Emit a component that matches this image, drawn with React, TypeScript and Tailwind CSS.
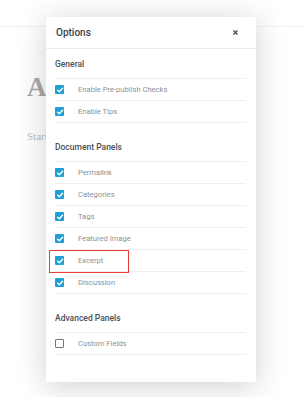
import { X } from "lucide-react";

type Item = { label: string; checked: boolean; marked?: boolean };

const sections: { title: string; items: Item[] }[] = [
  {
    title: "General",
    items: [
      { label: "Enable Pre-publish Checks", checked: true },
      { label: "Enable Tips", checked: true },
    ],
  },
  {
    title: "Document Panels",
    items: [
      { label: "Permalink", checked: true },
      { label: "Categories", checked: true },
      { label: "Tags", checked: true },
      { label: "Featured Image", checked: true },
      { label: "Excerpt", checked: true, marked: true },
      { label: "Discussion", checked: true },
    ],
  },
  {
    title: "Advanced Panels",
    items: [{ label: "Custom Fields", checked: false }],
  },
];

function Checkbox({ checked }: { checked: boolean }) {
  if (!checked) {
    return <span className="block size-[9px] rounded-[1px] border-[1.5px] border-[#6c7781] bg-white" />;
  }
  return (
    <span className="grid size-[9px] place-items-center rounded-[1px] bg-[#1e9fd6]">
      <svg viewBox="0 0 10 10" className="size-[8px]">
        <path d="M2 5.2 L4.2 7.3 L8.2 2.8" fill="none" stroke="white" strokeWidth="1.8" strokeLinecap="round" strokeLinejoin="round" />
      </svg>
    </span>
  );
}

export default function App() {
  return (
    <div className="relative h-[397px] w-[305px] overflow-hidden bg-white font-['Roboto','Open_Sans',sans-serif]">
      {/* editor behind the modal */}
      <div className="h-[27px] border-b border-[#f1f1f1]" />
      <div className="pl-[27px] font-['Liberation_Serif',serif]">
        <p className="mt-[47px] text-[27px] leading-[26px] font-bold text-[#a9a9a9]">A</p>
        <p className="mt-[28px] text-[11px] text-[#bdbdbd]">Start writing</p>
      </div>

      {/* options modal */}
      <div className="absolute top-[17px] left-[46px] flex h-[365px] w-[210px] flex-col bg-white shadow-[0_4px_28px_rgba(30,35,40,0.22)]">
        <div className="flex h-[32px] items-center justify-between border-b border-[#e9ebec] pr-[17px] pl-[10px]">
          <span className="text-[10px] font-medium text-[#3a3f44]">Options</span>
          <X className="size-[7px] text-[#40464d]" strokeWidth={4} />
        </div>
        <div className="pr-[10px] pl-[9px]">
          {sections.map((s, i) => (
            <section key={s.title} className={i === 0 ? "pt-[8px]" : "pt-[17px]"}>
              <h2 className="mb-[7px] text-[8.5px] leading-[14px] font-medium text-[#4b5056]">{s.title}</h2>
              <div className="border-t border-[#eceeef]">
                {s.items.map((it) => (
                  <div key={it.label} className="relative flex h-[22px] items-center border-b border-[#eceeef]">
                    <Checkbox checked={it.checked} />
                    <span className="ml-[14px] text-[7.6px] text-[#8d9196]">{it.label}</span>
                    {it.marked && (
                      <span className="pointer-events-none absolute top-0 left-[-6px] h-[23px] w-[80px] border-[1.5px] border-[#ec3b3b]" />
                    )}
                  </div>
                ))}
              </div>
            </section>
          ))}
        </div>
      </div>
    </div>
  );
}
